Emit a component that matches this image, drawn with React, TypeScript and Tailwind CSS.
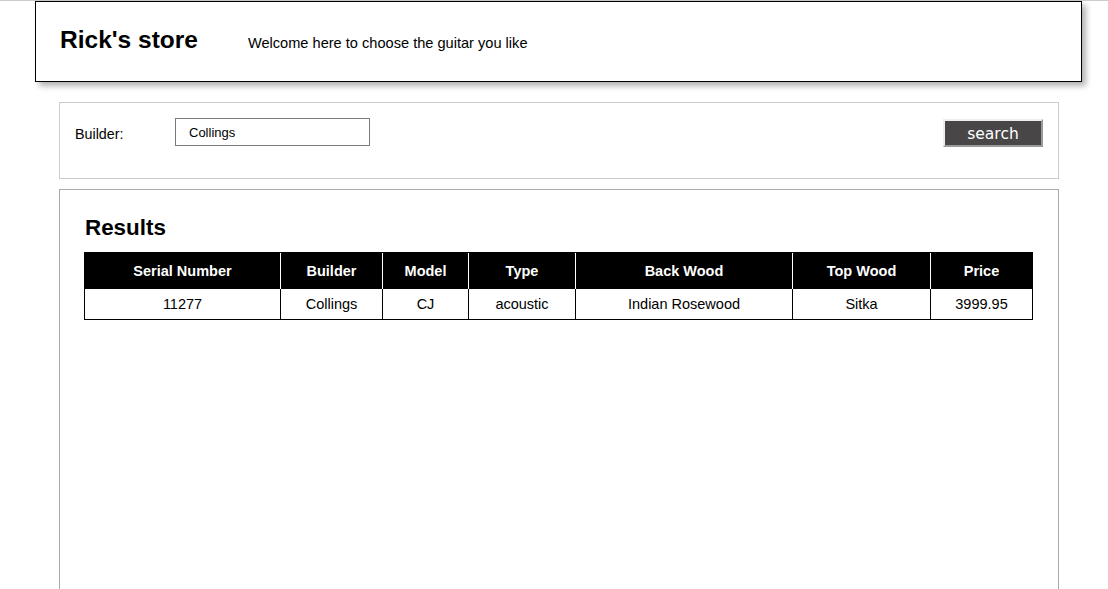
import React from "react";

const cols = [
  { label: "Serial Number", w: 195, v: "11277" },
  { label: "Builder", w: 102, v: "Collings" },
  { label: "Model", w: 86, v: "CJ" },
  { label: "Type", w: 107, v: "acoustic" },
  { label: "Back Wood", w: 217, v: "Indian Rosewood" },
  { label: "Top Wood", w: 138, v: "Sitka" },
  { label: "Price", w: 102, v: "3999.95" },
];

export default function App() {
  return (
    <div
      className="min-h-[589px] bg-white border-t border-[#cccccc] text-black"
      style={{ fontFamily: '"Liberation Sans", Arial, sans-serif' }}
    >
      <header className="ml-[35px] w-[1047px] h-[81px] border border-black bg-white shadow-[4px_4px_6px_rgba(0,0,0,0.3)] flex items-center pl-[24px]">
        <h1 className="text-[24.5px] font-bold leading-none mt-[-2px]">Rick's store</h1>
        <p className="ml-[50px] text-[14.6px] mt-[4px]">Welcome here to choose the guitar you like</p>
      </header>

      <section className="mt-[20px] ml-[59px] w-[1000px] h-[77px] border border-[#cccccc] flex items-start pl-[15px] pr-[15px] pt-[15px]">
        <label className="w-[100px] text-[14.3px] leading-[28px] mt-[2px]">Builder:</label>
        <div className="w-[195px] h-[28px] border border-[#7a7a7a] pl-[13px] flex items-center text-[13px] pt-[1px]">
          Collings
        </div>
        <div className="flex-1" />
        <button
          className="mt-[1px] w-[100px] h-[28px] bg-[#484646] text-white leading-none border-2 border-t-[#eeeeee] border-l-[#eeeeee] border-r-[#9a9a9a] border-b-[#9a9a9a] flex items-center justify-center pt-[3px]"
          style={{ fontFamily: '"DejaVu Sans", Verdana, sans-serif', fontSize: "15.5px" }}
        >
          search
        </button>
      </section>

      <section className="mt-[10px] ml-[59px] w-[1000px] h-[410px] border border-[#aaaaaa] pl-[24px] pt-[24px]">
        <h2 className="text-[22.4px] font-bold leading-[28px] mb-[10px] pl-[1px]">Results</h2>
        <table className="table-fixed border-separate border-spacing-0 border border-black w-[949px] text-[14.5px]">
          <colgroup>
            {cols.map((c, i) => (
              <col key={i} style={{ width: c.w }} />
            ))}
          </colgroup>
          <thead>
            <tr>
              {cols.map((c, i) => (
                <th
                  key={i}
                  className={`bg-black text-white font-bold h-[36px] p-0 pt-[2px] text-center ${i > 0 ? "border-l border-white" : ""}`}
                >
                  {c.label}
                </th>
              ))}
            </tr>
          </thead>
          <tbody>
            <tr>
              {cols.map((c, i) => (
                <td
                  key={i}
                  className={`h-[30px] p-0 pt-[1px] text-center ${i > 0 ? "border-l border-black" : ""}`}
                >
                  {c.v}
                </td>
              ))}
            </tr>
          </tbody>
        </table>
      </section>
    </div>
  );
}
